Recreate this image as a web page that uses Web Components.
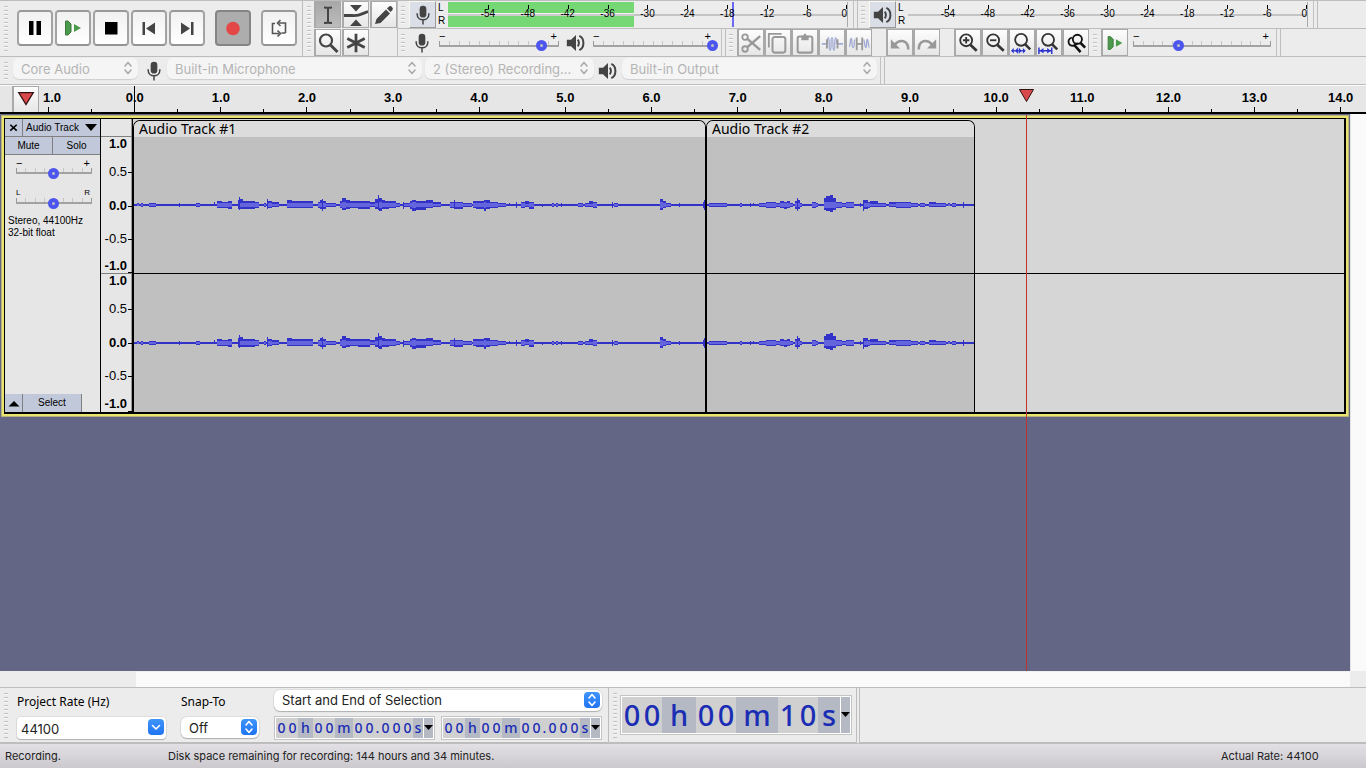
<!DOCTYPE html>
<html lang="en">
<head>
<meta charset="utf-8">
<title>Audacity</title>
<style>
html,body{margin:0;height:100%;overflow:hidden}
body{font-family:Inter,sans-serif;font-size:13px;background:#ececec;color:#000}
</style>
</head>
<body>
<au-app></au-app>
<script>
const ICONS = {
  pause:'<path fill="#000" d="M6 5h4.500v14H6zM13.500 5H18v14h-4.500z"/>',
  play:'<path fill="#4b9a4b" stroke="#3a7a3c" d="M4.500 5h2.500l3 3v8l-3 3h-2.500z"/><path fill="#4b9a4b" d="M13 8l7 4-7 4z"/>',
  stop:'<path fill="#000" d="M6 6h12.500v12.500H6z"/>',
  start:'<path fill="#444" d="M5.500 6h2.500v13H5.500zM18 6.500v12l-9-6z"/>',
  end:'<path fill="#444" d="M16 6h2.500v13H16zM6 6.500v12l9-6z"/>',
  record:'<circle cx="12" cy="12.500" r="6.800" fill="#e34747"/>',
  loop:'<path fill="none" stroke="#555" stroke-width="1.600" d="M12 7h6.500v10M12 17.500H5.500V7.500H8"/><path fill="none" stroke="#555" stroke-width="1.600" d="M13.500 4L10.500 7l3 3M10.500 14.500l3 3-3 3M18.500 17h-4"/>',
  ibeam:'<path fill="none" stroke="#444" stroke-width="2" d="M8 4.500c3 0 4 0 4 1.500 0-1.500 1-1.500 4-1.500M12 5.500v14M8 20c3 0 4 0 4-1.500 0 1.500 1 1.500 4 1.500"/>',
  envelope:'<path fill="#444" d="M6 2h12l-6 6.500zM6 23h12l-6-6.500z"/><path fill="none" stroke="#444" stroke-width="2.800" d="M0 12.500h8c7 1 10-2 16-4"/>',
  pencil:'<path fill="#444" d="M3 21l1.500-5L14 6.500l4 4L8.500 20zM15 5.500l2-2q1.500-1 3 .5t.5 3l-2 2z"/>',
  zoom:'<circle cx="10" cy="9.500" r="6" fill="none" stroke="#444" stroke-width="2.200"/><path stroke="#444" stroke-width="3" d="M14.500 14l7 7"/>',
  multi:'<path stroke="#444" stroke-width="3" d="M12 2v20M2.500 7l19 10M21.500 7l-19 10"/>',
  mic:'<rect x="8" y="1" width="8" height="14" rx="4" fill="#444"/><path fill="none" stroke="#444" stroke-width="1.800" d="M5 10v1c0 9 14 9 14 0v-1M12 17.500v6"/>',
  speaker:'<path fill="#444" d="M1 8h5l6-5.500v19L6 16H1z"/><path fill="none" stroke="#444" stroke-width="2.400" d="M14 8c2 2 2 6 0 8M16 3.500c6.500 2.500 6.500 14.500 0 17"/>',
  cut:'<g fill="none" stroke="#999" stroke-width="2"><circle cx="5.500" cy="5.500" r="3"/><circle cx="5.500" cy="18.500" r="3"/></g><path stroke="#999" stroke-width="2.800" d="M8 7.500l14 12M8 16.500l14-12"/>',
  copy:'<path fill="none" stroke="#999" stroke-width="2" d="M2 17V2h14"/><rect x="6" y="5.500" width="14" height="17" rx="2.500" fill="none" stroke="#999" stroke-width="2.200"/>',
  paste:'<rect x="4" y="5" width="16" height="17.500" rx="2" fill="none" stroke="#999" stroke-width="2.200"/><path fill="#999" d="M8 4h2.500c0-3 3-3 3 0H16v5H8z"/>',
  trim:'<path stroke="#a3abd4" stroke-width="2" d="M1 13h5M18 13h6"/><path fill="none" stroke="#a3abd4" stroke-width="1.400" d="M7 13c0-9 2-9 2 0s2 9 2 0 2-9 2 0 2 9 2 0 2-9 2 0"/><path stroke="#999" stroke-width="2" d="M6.500 8v10M18 8v10"/>',
  silence:'<path fill="none" stroke="#a3abd4" stroke-width="1.500" d="M1 16c2 0 1-9 2.500-9s0 10 2 10 1-9 2-9M17 8c1 0 1 9 2.500 9s0-9 1.500-9 1 9 2.500 9"/><path stroke="#999" stroke-width="2" d="M9.500 6v14M15.500 6v14M10 13h6"/>',
  undo:'<path fill="none" stroke="#999" stroke-width="2.800" d="M21 19c0-10-9-12-15-5"/><path fill="#999" d="M2 8v10h10z"/>',
  redo:'<path fill="none" stroke="#999" stroke-width="2.800" d="M3 19c0-10 9-12 15-5"/><path fill="#999" d="M22 8v10h-10z"/>',
  zoomin:'<circle cx="10" cy="9" r="6.500" fill="none" stroke="#333" stroke-width="2"/><path stroke="#333" stroke-width="2" d="M6.500 9h7M10 5.500v7"/><path stroke="#333" stroke-width="3" d="M14.500 14l7 6.500"/>',
  zoomout:'<circle cx="10" cy="9" r="6.500" fill="none" stroke="#333" stroke-width="2"/><path stroke="#333" stroke-width="2" d="M6.500 9h7"/><path stroke="#333" stroke-width="3" d="M14.500 14l7 6.500"/>',
  zoomsel:'<circle cx="11" cy="8.500" r="6.500" fill="none" stroke="#333" stroke-width="2"/><path stroke="#333" stroke-width="2.800" d="M15 13l6 6"/><path stroke="#2a35cc" stroke-width="1.400" d="M1 20.500h14"/><path fill="#2a35cc" d="M7.500 17v7l-3-3.500zM8.500 17v7l3-3.500zM0 20.500l3-3v6zM16 20.500l-3-3v6z"/>',
  zoomfit:'<circle cx="11" cy="8.500" r="6.500" fill="none" stroke="#333" stroke-width="2"/><path stroke="#333" stroke-width="2.800" d="M15 13l6 6"/><path stroke="#2a35cc" stroke-width="1.600" d="M1 20.500h14M1 17v7M15 17v7"/><path fill="#2a35cc" d="M2 20.500l4-3v6zM14 20.500l-4-3v6z"/>',
  zoomtoggle:'<circle cx="13.500" cy="8" r="5" fill="none" stroke="#111" stroke-width="2"/><path stroke="#111" stroke-width="2.800" d="M17 12l5 5M10 14l7 8"/><path fill="none" stroke="#111" stroke-width="2" d="M7.500 6C2 8 3 15 9 15l5-3"/>',
  pin:'<path fill="#d9494b" stroke="#301010" stroke-width="1.300" d="M4 4h16l-8 13z"/>',
  up:'<path fill="#000" d="M1 19l11-11 11 11z"/>',
  close:'<path stroke="#000" stroke-width="3.500" d="M5 6l14 13M19 6L5 19"/>'
};
const icon = (name, size) => `<svg width="${size}" height="${size}" viewBox="0 0 24 24" aria-hidden="true">${ICONS[name]}</svg>`;

function define(name, css, render) {
  customElements.define(name, class extends HTMLElement {
    connectedCallback() {
      if (this.shadowRoot) return;
      this.attachShadow({mode:'open'}).innerHTML =
        `<style>*{box-sizing:border-box}${css}</style>${render(this)}`;
    }
  });
}
const attr = (el, name, fallback = '') => el.getAttribute(name) ?? fallback;

define('au-icon', ':host{display:flex;flex:none}', el => icon(attr(el,'name'), attr(el,'size',20)));

/* A toolbar button; kinds: flat cell (default), big (transport), meter. */
define('au-button', `
:host{display:block;flex:none;width:27px;height:27px}
:host([kind=big]){width:36px;height:36px}
button{width:100%;height:100%;padding:0;display:flex;align-items:center;justify-content:center;
 border:1px solid #a9a9a9;border-width:1px 1px 1px 2px;background:linear-gradient(#fdfdfd,#e6e6e6);font:inherit}
:host([kind=big]) button{border:2px solid #999;border-color:#999 #a3a3a3 #949494;border-radius:4px;background:linear-gradient(#f1f1f1,#fff)}
:host([kind=big][pressed]) button{background:#adadad;border-color:#858585}
:host([pressed]) button{background:linear-gradient(#a8a8a8,#bcbcbc)}
:host([kind=meter]) button{background:#dadfe7;border:1px solid #fff;border-color:#fbfaf0 #999 #999 #fbfaf0}
svg{flex:none}
`, el => `<button type="button" aria-label="${attr(el,'label')}">${icon(attr(el,'icon'), attr(el,'size',22))}</button>`);

/* A toolbar: grip on the left, separator on the right. */
define('au-toolbar', `
:host{display:flex;align-items:center;flex:none;padding-left:4px;border-right:1px solid #bdbdbd;border-bottom:1px solid #bdbdbd;min-width:0}
.grip{flex:none;width:4px;align-self:stretch;margin:5px 0 4px;background:repeating-linear-gradient(#c2c2c2 0 1px,#f7f7f7 1px 2px,transparent 2px 4px)}
.end{display:none;flex:none;width:4px;align-self:stretch;border-left:1px solid #c2c2c2}
:host([resizable]) .end{display:block}
`, () => '<span class="grip"></span><slot></slot><span class="end"></span>');

define('au-slider', `
:host{display:block;flex:none;height:22px;font:10px/10px "Liberation Sans",Arial,sans-serif}
.ends{display:flex;justify-content:space-between;height:9px;padding-right:2px}
.ends span{font-size:var(--end-size,11px);line-height:8px}
.rail{position:relative}
.ticks{display:flex;height:4px}
.ticks i{flex:1;border-left:1px solid #c6c6c6}
.ticks i:first-child{border-color:#999}
.ticks i:last-child{border-right:1px solid #999}
.line{height:2px;background:#a2a2a2}
input{position:absolute;left:-5px;top:0;width:calc(100% + 10px);height:10px;margin:0;appearance:none;background:none}
input::-webkit-slider-thumb{appearance:none;width:11px;height:11px;border:4px solid #4c55ee;border-radius:50%;background:#c0c0c8}
`, el => `<div class="ends"><span>${attr(el,'low','−')}</span><span>${attr(el,'high','+')}</span></div>
<div class="rail"><div class="ticks">${'<i></i>'.repeat(+attr(el,'ticks',12))}</div><div class="line"></div>
<input type="range" min="0" max="100" value="${attr(el,'value',50)}" aria-label="${attr(el,'label')}"></div>`);

define('au-meter', `
:host{display:flex;flex:1;min-width:0;height:25px;font:10px/12px "Liberation Sans",Arial,sans-serif}
.ch{width:10px;display:flex;flex-direction:column;justify-content:space-between}
.scale{flex:1;position:relative;display:grid;grid-template-columns:1fr repeat(9,2fr) 1fr;border-right:1px solid #aaa;
 background:linear-gradient(transparent 12px,#c4c4c4 12px 14px,transparent 14px)}
.level{position:absolute;left:0;top:0;bottom:0;width:var(--level,0%);background:linear-gradient(#76d874 11px,#f2f2f2 11px 12px,#ccc 12px 14px,#76d874 14px)}
.peak{position:absolute;left:var(--peak);top:0;bottom:0;width:2px;background:#6a6af2}
.n{position:relative;text-align:center;padding-top:6px;min-width:0}
.n::before{content:"";position:absolute;left:50%;top:3px;width:1px;height:4px;background:#000}
.n:last-child{text-align:right}
.n:last-child::before{left:auto;right:0}
`, el => {
  const lv = attr(el,'level'), pk = attr(el,'peak');
  return `<div class="ch"><span>L</span><span>R</span></div><div class="scale" style="--level:${lv||0}%;--peak:${pk||0}%">
  ${lv?'<span class="level"></span>':''}${pk?'<span class="peak"></span>':''}<span></span>
  ${[-54,-48,-42,-36,-30,-24,-18,-12,-6,0].map(n=>`<span class="n">${n}</span>`).join('')}</div>`;
});

/* Pop-up menu, or with "combo" an editable box; "dim" is the disabled look. */
define('au-select', `
:host{display:block;position:relative;flex:none;height:21px}
select,input{width:100%;height:100%;margin:0;padding:0 18px 0 8px;border:0;border-radius:6px;background:#fff;color:#222;
 appearance:none;font:13px/18px Inter,sans-serif;box-shadow:0 1px 1px #b0b0b0,0 0 0 1px #dedede;text-overflow:ellipsis}
input{padding:3px 18px 0 4px;border-radius:4px}
:host([dim]) select{background:#f5f5f5;color:#b4b4b4;opacity:1;box-shadow:0 1px 1px #cfcfcf}
.cap{position:absolute;right:2px;top:2px;width:16px;height:16px;border-radius:4px;background:linear-gradient(#3f94fb,#1f74f2);color:#fff;pointer-events:none}
:host([dim]) .cap{background:none;color:#aaa}
svg{display:block}
`, el => {
  const v = attr(el,'value'), l = attr(el,'label');
  const field = el.hasAttribute('combo') ? `<input type="text" value="${v}" aria-label="${l}">`
    : `<select aria-label="${l}" ${el.hasAttribute('dim')?'disabled':''}><option>${v}</option></select>`;
  const d = el.hasAttribute('combo') ? 'M4.500 6.500l3.500 3.500 3.500-3.500' : 'M5 6l3-3.500L11 6M5 10l3 3.500L11 10';
  return `${field}<span class="cap"><svg width="16" height="16" viewBox="0 0 16 16"><path d="${d}" fill="none" stroke="currentColor" stroke-width="1.600" stroke-linecap="round" stroke-linejoin="round"/></svg></span>`;
});

/* Time readout: digits sit on light cells, unit letters on the dark ground. */
define('au-time', `
:host{display:flex;flex:none;padding:1px;background:#fff;border:1px solid #c4c4c4;
 font:500 14px/20px "Noto Sans",sans-serif;color:#1a2db4;--d:11px;--h:15px;--m:18px}
:host([big]){font-size:29px;line-height:36px;--d:20px;--h:34px;--m:42px}
.f{flex:1;display:flex;background:#b4b9c3}
.g{display:flex;background:#d0d0d0}
.g span{width:var(--d);text-align:center}
.u{text-align:center}
.h{width:var(--h)}.m{width:var(--m)}.dot{width:5px;background:#d0d0d0}.s{flex:1}
button{flex:none;width:9px;padding:0;margin-left:1px;border:0;background:#b4b9c3;display:flex;align-items:center}
`, el => {
  const cls = {h:'h',m:'m','.':'dot',s:'s'};
  const html = attr(el,'value').match(/\d+|\S/g).map(p => /\d/.test(p)
    ? `<span class="g">${[...p].map(c=>`<span>${c}</span>`).join('')}</span>`
    : `<span class="u ${cls[p]}">${p}</span>`).join('');
  return `<div class="f" role="timer">${html}</div><button type="button" aria-label="Format"><svg width="9" height="6"><path d="M0 0h9L4.500 5z"/></svg></button>`;
});

define('au-ruler', `
:host{display:grid;grid-template-columns:repeat(15,minmax(0,1fr)) minmax(0,.8fr);position:relative;height:29px;padding-left:5px;overflow:hidden;
 background:#e6e6e6;border-top:1px solid #fafafa;border-bottom:2px solid #000;font:bold 13px/16px "Liberation Sans",Arial,sans-serif}
.c{position:relative;text-align:center;padding:4px 0 0 1px}
.c:first-of-type{padding-left:8px}
.c:last-of-type{width:125%}
.c::before,.c::after{content:"";position:absolute;bottom:0;width:1px;background:#000}
.c::before{left:50%;height:5px}
.c::after{left:0;height:3px}
.c:first-of-type::after{display:none}
.zero::before{height:100%}
au-button{position:absolute;left:12px;top:0}
`, () => {
  const labels = ['1.0','0.0',...Array.from({length:14},(_,i)=>(i+1)+'.0')];
  return labels.map((t,i)=>`<div class="c${i===1?' zero':''}">${t}</div>`).join('') +
    '<au-button icon="pin" label="Pinned play head" size="22"></au-button>';
});

/* [from, to, up, down] in track pixels; everything else is the flat centre line. */
const WAVE = [
[137,139,2,1],[141,143,2,2],[149,156,2,2],[179,180,2,2],[196,200,2,2],[214,215,3,1],[217,222,4,3],[222,228,3,3],[228,232,4,4],
[238,239,5,4],[239,240,8,5],[240,243,6,4],[243,255,4,4],[255,259,3,3],[264,266,2,2],[267,268,6,4],[268,272,4,3],[272,279,3,2],
[287,292,5,3],[292,301,4,3],[301,313,4,3],[318,320,3,3],[320,322,5,4],[322,323,6,6],[323,326,4,4],[326,336,2,2],
[340,342,4,3],[342,346,7,5],[346,350,5,4],[350,358,4,3],[358,370,4,4],[370,375,3,2],[375,378,6,4],[378,379,10,5],[379,382,7,6],[382,385,5,4],[385,389,4,4],[389,396,4,3],[396,400,2,2],
[403,404,3,4],[404,410,2,2],[410,412,4,4],[412,416,5,6],[416,426,4,5],[426,433,5,3],[433,441,3,2],
[450,454,3,3],[454,455,5,4],[455,463,3,4],[463,472,2,2],[473,476,4,3],[476,484,4,4],[484,486,5,6],[486,490,5,4],[490,498,3,3],[498,506,2,2],[509,510,2,1],
[516,517,3,3],[521,525,3,3],[525,529,4,2],[529,534,3,4],[542,543,1,2],[552,554,2,2],[556,558,2,2],[561,562,2,2],[578,583,2,2],[585,589,2,2],[589,593,4,2],[593,597,3,3],
[612,613,3,3],[614,618,2,2],[660,663,6,5],[663,666,4,3],[666,671,2,2],[679,680,2,2],[703,704,3,3],[704,705,5,5],
[709,727,2,2],[740,742,2,2],[750,751,2,2],[753,754,2,1],[759,766,2,2],[766,776,3,3],[776,780,2,2],[780,784,4,3],[784,787,3,4],[787,790,4,3],[790,793,2,2],
[795,797,4,4],[797,798,7,6],[798,800,5,4],[800,802,2,2],[812,816,3,3],[816,818,2,2],[824,826,7,5],[826,830,9,6],[830,833,10,7],[833,836,7,5],[836,842,3,3],[842,846,2,2],[846,854,3,3],
[860,861,2,2],[863,864,5,6],[864,868,5,4],[868,870,3,3],[870,878,4,2],[878,886,2,2],[889,896,3,2],[896,911,3,3],[911,918,2,2],[920,925,2,2],[929,936,3,2],[936,946,2,2],[948,950,2,1],[952,956,2,2],[963,964,3,3]];

/* One audio clip: name bar and two stacked channels of waveform. */
define('au-clip', `
:host{display:grid;grid-template-rows:16px 136px 1px 1fr;min-width:0;border:1px solid #000;border-bottom:0;border-radius:7px 7px 0 0;background:#c0c0c0;overflow:hidden}
.name{background:#dcdcdc;font:14px/16px "Noto Sans",sans-serif;padding-left:5px;white-space:nowrap}
hr{margin:0;border:0;background:#000}
svg{display:block;width:100%;height:100%}
`, el => {
  const from = +attr(el,'from'), to = +attr(el,'to'), w = to - from;
  const rects = mid => {
    let peak = `M0 ${mid-1}H${w}V${mid+1}H0Z`, rms = '';
    for (const [a,b,u,d] of WAVE) {
      if (a < from || b > to) continue;
      peak += `M${a-from} ${mid-u}H${b-from}V${mid+d}H${a-from}Z`;
      if (b - a > 1) { const r = Math.max(1, Math.min(3, Math.round(Math.min(u,d)*.6)));
        rms += `M${a-from} ${mid-r}H${b-from}V${mid+r}H${a-from}Z`; }
    }
    return `<path fill="#3232c8" d="${peak}"/><path fill="#6464dc" d="${rms}"/>`;
  };
  const svg = (h, mid) => `<svg viewBox="0 0 ${w} ${h}" preserveAspectRatio="none" shape-rendering="crispEdges">${rects(mid)}</svg>`;
  return `<div class="name"><slot></slot></div>${svg(136,68)}<hr>${svg(138,69)}`;
});

define('au-track', `
:host{display:grid;grid-template-columns:97px 32px minmax(0,1fr);height:302px;flex:none;margin:1px 1px 0;border:3px solid #e9e36f;outline:1px solid #b5b27c;outline-offset:-1px;
 font:11px/12px "Liberation Sans",Arial,sans-serif;background:#e6e6e6}
.panel{display:flex;flex-direction:column;border:solid #000;border-width:1px 1px 2px 1px}
.row{display:flex;height:18px;flex:none;border-bottom:1px solid #808080}
button{border:0;border-right:1px solid #808080;background:#c0c8d9;padding:0;font:10px/16px "Liberation Sans",Arial,sans-serif;color:#000;flex:1;display:flex;align-items:center;justify-content:center;gap:6px}
button.sq{flex:none;width:18px}
button:last-child{border-right:0}
.sl{padding:4px 8px 0 11px}
au-slider.pan{--end-size:8px;margin-top:8px}
.info{margin:4px 0 auto 3px;font-size:10px;line-height:12px;white-space:pre}
.foot{display:flex;height:18px;width:77px;border-right:1px solid #808080}
.vr{border:solid #000;border-width:1px 1px 2px 0;box-shadow:inset -1px 0 #999;padding-top:17px;display:grid;grid-template-rows:137px 1fr;font-size:13px;text-align:right}
.v{display:grid;grid-template-rows:14px 41px 27px 40px 1fr;border-top:1px solid #808080}
.v span{position:relative;padding-right:5px;display:flex;align-items:center;justify-content:flex-end}
.v span::after{content:"";position:absolute;right:0;top:50%;width:4px;height:1px;background:#000}
.v span:last-child::after{top:auto;bottom:0}
.v span:first-child::after{display:none}
.v .b{font-weight:bold}
.lane{display:grid;grid-template-columns:573fr 269fr 369fr;padding-top:1px;border:solid #000;border-width:1px 2px 2px 0;background:#d6d6d6}
.free{display:grid;grid-template-rows:153px 1px 1fr}
.free hr{margin:0;border:0;background:#000}
`, () => {
  const scale = '<div class="v"><span class="b">1.0</span><span>0.5</span><span class="b">0.0</span><span>-0.5</span><span class="b">-1.0</span></div>';
  return `<div class="panel">
  <div class="row"><button class="sq" aria-label="Close track">${icon('close',11)}</button><button>Audio Track<svg width="12" height="7"><path d="M0 0h12L6 7z"/></svg></button></div>
  <div class="row"><button>Mute</button><button>Solo</button></div>
  <div class="sl"><au-slider value="49" ticks="8" label="Gain"></au-slider><au-slider class="pan" low="L" high="R" value="49" ticks="8" label="Pan"></au-slider></div>
  <div class="info">Stereo, 44100Hz
32-bit float</div>
  <div class="foot"><button class="sq" aria-label="Collapse">${icon('up',12)}</button><button>Select</button></div>
</div>
<div class="vr">${scale}${scale}</div>
<div class="lane"><au-clip from="134" to="705">Audio Track #1</au-clip><au-clip from="707" to="974">Audio Track #2</au-clip><div class="free"><span></span><hr></div></div>`;
});

define('au-playhead', `
:host{position:absolute;top:0;bottom:0;left:calc(134px + (100% - 134px) * .724);width:17px;margin-left:-8px;pointer-events:none;display:flex;flex-direction:column;align-items:center}
svg{flex:none;margin-top:4px}
i{flex:1;width:1px;margin-top:12px;background:#c0322c}
`, () => '<svg width="17" height="14" viewBox="0 0 17 14"><path d="M1.500 .5h14l-7 12z" fill="#d9494b" stroke="#301010"/></svg><i></i>');

define('au-status', `
:host{display:grid;grid-template-columns:163px 1fr 145px;align-items:center;height:25px;flex:none;padding-left:5px;
 border-top:1px solid #bdbdbd;background:linear-gradient(#e3e0e5,#cbc9ce);font:11px/16px Inter,sans-serif;color:#222}
`, () => '<slot></slot>');

define('au-app', `
:host{display:flex;flex-direction:column;height:100%;background:#ececec}
.dock{flex:none;border-top:1px solid #bdbdbd;display:flex;flex-direction:column}
.top{display:flex;height:56px}
.stack{flex:1;min-width:0;display:grid;grid-template-rows:28px 28px}
.line{display:flex;min-width:0;border-bottom:1px solid #bdbdbd}
.line>au-toolbar{border-bottom:0}
.line>au-toolbar.s{padding-left:3px}
.transport{width:303px}
.set{display:flex;gap:2px;padding:0 0 2px 9px}
.set .gap{margin-left:8px}
.tools{width:95px}
.toolgrid{display:grid;grid-template-columns:repeat(3,27px);grid-template-rows:27px 27px;gap:1px;margin-left:3px}
.meters{padding-right:48px}
.meters au-toolbar{flex:1}
.meters au-button{margin:0 2px 0 4px}
.meters au-meter{margin-right:5px}
.mixer{width:328px}
.mixer au-icon{margin:0 7px}
.mixer au-slider{width:120px}
.cells{display:flex}
.edit{width:364px}
.edit .cells{margin-left:4px}
.edit .cells+.cells{margin-left:14px}
.speed{width:191px}
.speed au-button{margin:0 5px 0 4px}
.speed au-slider{width:138px}
.device{display:flex;height:28px;border-bottom:1px solid #bdbdbd}
.device au-toolbar{border-bottom:0}
.device au-select{margin-bottom:4px}
.device au-icon{margin:0 4px}
.device au-icon.m{margin:0 3px 0 6px}
.main{flex:1;min-height:0;position:relative;display:flex;flex-direction:column}
.work{flex:1;min-height:0;display:flex}
.canvas{flex:1;min-width:0;background:#636684}
.vs{width:16px;background:#fafafa;border-left:1px solid #e4e4e4}
.hs{flex:none;height:16px;margin:0 16px 0 136px;background:#fafafa;border-top:1px solid #f0f0f0}
.bottom{display:flex;flex:none;height:56px;border-top:1px solid #bdbdbd}
.sel{width:609px}
.form{display:grid;grid-template-columns:149px 78px 328px;column-gap:15px;grid-template-rows:25px 26px;align-items:center;margin-left:9px;font:12px/16px "Noto Sans",sans-serif}
.form .mode{align-self:start}
.form .rate{height:22px}
.times{display:flex;justify-content:space-between}
.times au-time{width:161px}
.clock{width:248px}
.clock au-time{width:232px;margin-left:3px}
.rest{flex:1;border-bottom:1px solid #bdbdbd;border-left:1px solid #bdbdbd;margin-left:2px}
`, () => {
  const btn = (i, l, x='') => `<au-button icon="${i}" label="${l}" ${x}></au-button>`;
  const big = (i, l, x='') => btn(i, l, `kind="big" size="24" ${x}`);
  return `
<header class="dock">
  <div class="top">
    <au-toolbar class="transport"><div class="set">
      ${big('pause','Pause')}${big('play','Play')}${big('stop','Stop')}${big('start','Skip to start')}${big('end','Skip to end')}
      ${big('record','Record','pressed class="gap"')}${big('loop','Loop','class="gap"')}
    </div></au-toolbar>
    <au-toolbar class="tools"><div class="toolgrid">
      ${btn('ibeam','Selection tool','pressed size="24"')}${btn('envelope','Envelope tool','size="24"')}${btn('pencil','Draw tool','size="24"')}${btn('zoom','Zoom tool','size="24"')}${btn('multi','Multi-tool')}
    </div></au-toolbar>
    <div class="stack">
      <div class="line meters">
        <au-toolbar class="s" resizable>${btn('mic','Recording meter','kind="meter" size="20"')}<au-meter level="46.5" peak="71.2"></au-meter></au-toolbar>
        <au-toolbar class="s" resizable>${btn('speaker','Playback meter','kind="meter" size="20"')}<au-meter></au-meter></au-toolbar>
      </div>
      <div class="line">
        <au-toolbar class="s mixer" resizable><au-icon name="mic" size="20"></au-icon><au-slider value="86" label="Recording volume"></au-slider><au-icon name="speaker" size="20"></au-icon><au-slider value="100" label="Playback volume"></au-slider><span style="flex:1"></span></au-toolbar>
        <au-toolbar class="s edit" style="border-right:0">
          <div class="cells">${btn('cut','Cut')}${btn('copy','Copy')}${btn('paste','Paste')}${btn('trim','Trim')}${btn('silence','Silence')}</div>
          <div class="cells">${btn('undo','Undo')}${btn('redo','Redo')}</div>
          <div class="cells">${btn('zoomin','Zoom in')}${btn('zoomout','Zoom out')}${btn('zoomsel','Fit selection')}${btn('zoomfit','Fit project')}${btn('zoomtoggle','Zoom toggle')}</div>
        </au-toolbar>
        <au-toolbar class="s speed" resizable>${btn('play','Play at speed')}<au-slider value="33" ticks="14" label="Play speed"></au-slider><span style="flex:1"></span></au-toolbar>
      </div>
    </div>
  </div>
  <div class="device"><au-toolbar resizable>
    <au-select dim label="Host" value="Core Audio" style="width:125px;margin-left:5px"></au-select>
    <au-icon class="m" name="mic" size="20"></au-icon>
    <au-select dim label="Recording device" value="Built-in Microphone" style="width:255px"></au-select>
    <au-select dim label="Channels" value="2 (Stereo) Recording..." style="width:169px;margin-left:3px"></au-select>
    <au-icon name="speaker" size="20"></au-icon>
    <au-select dim label="Playback device" value="Built-in Output" style="width:255px;margin-right:3px"></au-select>
  </au-toolbar></div>
</header>
<main class="main">
  <au-ruler></au-ruler>
  <div class="work"><div class="canvas"><au-track></au-track></div><div class="vs"></div></div>
  <au-playhead></au-playhead>
</main>
<div class="hs"></div>
<footer class="bottom">
  <au-toolbar class="sel"><div class="form">
    <span>Project Rate (Hz)</span><span>Snap-To</span><au-select class="mode" label="Selection mode" value="Start and End of Selection"></au-select>
    <au-select class="rate" combo label="Project Rate (Hz)" value="44100"></au-select><au-select label="Snap-To" value="Off"></au-select>
    <div class="times"><au-time value="00 h 00 m 00.000 s"></au-time><au-time value="00 h 00 m 00.000 s"></au-time></div>
  </div></au-toolbar>
  <au-toolbar class="s clock"><au-time big value="00 h 00 m 10 s"></au-time></au-toolbar>
  <div class="rest"></div>
</footer>
<au-status><span>Recording.</span><span>Disk space remaining for recording: 144 hours and 34 minutes.</span><span>Actual Rate: 44100</span></au-status>`;
});
</script>
</body>
</html>
